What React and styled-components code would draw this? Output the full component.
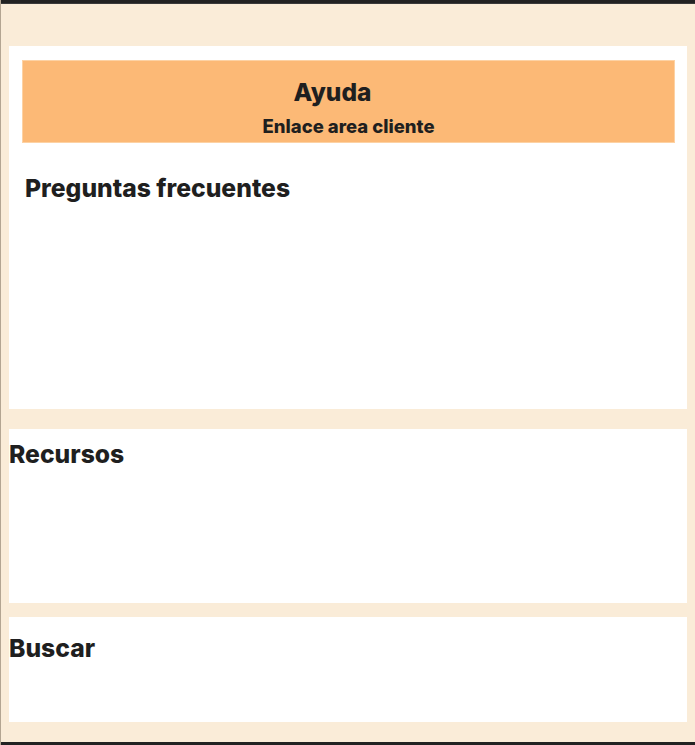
import React from "react";
import styled, { createGlobalStyle } from "styled-components";

const Global = createGlobalStyle`
  html, body {
    margin: 0;
    padding: 0;
    background: #faecd8;
  }
  body {
    font-family: Inter, "Noto Sans", sans-serif;
    color: #1f1f1f;
  }
`;

export default function App() {
  return (
    <>
      <Global />
      <Page>
        <TopBar />
        <Content>
          <Panel $top={14} $height={363}>
            <Header>
              <HeaderTitle>Ayuda</HeaderTitle>
              <HeaderLink>Enlace area cliente</HeaderLink>
            </Header>
            <SectionTitle $indent={16} $top={31}>
              Preguntas frecuentes
            </SectionTitle>
          </Panel>
          <Panel $top={11} $height={174} $gap={14}>
            <SectionTitle>Recursos</SectionTitle>
          </Panel>
          <Panel $top={17} $height={105}>
            <SectionTitle>Buscar</SectionTitle>
          </Panel>
        </Content>
        <BottomBar />
      </Page>
    </>
  );
}

const Page = styled.div`
  width: 695px;
  height: 745px;
  display: flex;
  flex-direction: column;
  border-left: 1px solid #b3a592;
  box-sizing: border-box;
`;

const TopBar = styled.div`
  height: 4px;
  background: #222222;
  border-bottom: 1px solid #3a3a3a;
  box-sizing: border-box;
`;

const BottomBar = styled.div`
  height: 3px;
  margin-top: auto;
  background: #222222;
`;

const Content = styled.div`
  display: flex;
  flex-direction: column;
  gap: 20px;
  padding: 42px 8px 0 8px;
`;

const Panel = styled.section`
  background: #ffffff;
  height: ${(p) => p.$height}px;
  box-sizing: border-box;
  padding: ${(p) => p.$top}px 12px 0 13px;
  margin-bottom: ${(p) => (p.$gap ? p.$gap - 20 : 0)}px;
  display: flex;
  flex-direction: column;
`;

const Header = styled.header`
  height: 83px;
  background: #fcb976;
  border: 1px solid #fdd2a4;
  box-sizing: border-box;
  display: flex;
  flex-direction: column;
  align-items: center;
  padding-top: 16px;
`;

const HeaderTitle = styled.h1`
  margin: 0 32px 0 0;
  font-size: 24.5px;
  font-weight: 800;
  line-height: 30px;
`;

const HeaderLink = styled.div`
  margin-top: 8px;
  font-size: 18.5px;
  font-weight: 800;
  line-height: 22px;
`;

const SectionTitle = styled.h2`
  margin: ${(p) => p.$top || 0}px 0 0 ${(p) => (p.$indent === undefined ? -13 : p.$indent - 13)}px;
  font-size: 24.7px;
  font-weight: 800;
  line-height: 29px;
`;
